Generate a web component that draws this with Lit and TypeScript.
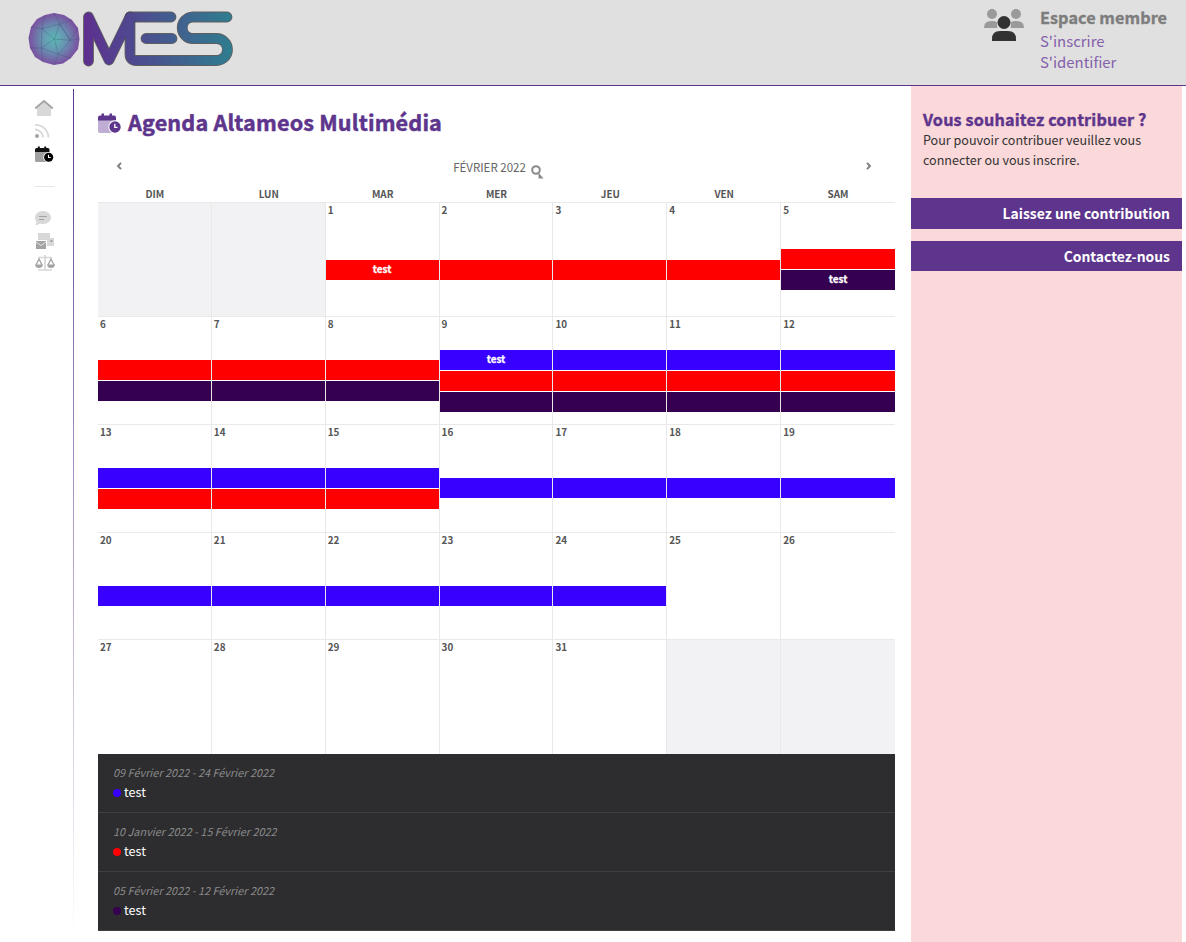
import { LitElement, html, svg, css, nothing } from "lit";
import { customElement } from "lit/decorators.js";
import { classMap } from "lit/directives/class-map.js";

type Bar = { color: "red" | "blue" | "plum"; label?: string };
type Day = { num?: number; bars: Bar[] };

const R: Bar = { color: "red" };
const B: Bar = { color: "blue" };
const P: Bar = { color: "plum" };

const WEEKDAYS = ["DIM", "LUN", "MAR", "MER", "JEU", "VEN", "SAM"];

function barsFor(day: number): Bar[] {
  if (day === 1) return [{ ...R, label: "test" }];
  if (day < 5) return [R];
  if (day === 5) return [R, { ...P, label: "test" }];
  if (day < 9) return [R, P];
  if (day === 9) return [{ ...B, label: "test" }, R, P];
  if (day < 13) return [B, R, P];
  if (day < 16) return [B, R];
  if (day < 25) return [B];
  return [];
}

const DAYS: Day[] = Array.from({ length: 35 }, (_, i) => {
  const num = i - 1;
  return num >= 1 && num <= 31 ? { num, bars: barsFor(num) } : { bars: [] };
});

const EVENTS = [
  { dates: "09 Février 2022 - 24 Février 2022", color: "blue", name: "test" },
  { dates: "10 Janvier 2022 - 15 Février 2022", color: "red", name: "test" },
  { dates: "05 Février 2022 - 12 Février 2022", color: "plum", name: "test" },
];

@customElement("app-root")
export class AppRoot extends LitElement {
  static styles = css`
    :host {
      display: block;
      height: 942px;
      overflow: hidden;
      background: #fff;
      font-family: "Noto Sans CJK JP", "Noto Sans", sans-serif;
      color: #333;
    }
    * { box-sizing: border-box; }
    svg { display: block; flex: none; }
    .header {
      height: 86px;
      display: flex;
      justify-content: space-between;
      background: #e0e0e0;
      border-bottom: 1px solid #5d368b;
      padding: 6px 0 0 24px;
    }
    .member { display: flex; width: 202px; gap: 16px; }
    .member svg { margin-top: 2px; }
    .member-title { font-size: 16.2px; font-weight: 700; letter-spacing: 0.07px; -webkit-text-stroke: 0.35px; color: #7d7d7d; line-height: 23px; margin-bottom: 1px; white-space: nowrap; }
    .member-link { font-size: 14.9px; color: #8560ab; line-height: 21px; white-space: nowrap; }
    .body { display: flex; height: 856px; }
    .rail {
      width: 74px;
      padding: 13px 0 0 35px;
      display: flex;
      flex-direction: column;
      background: linear-gradient(#5d368b, rgba(93, 54, 139, 0)) right 0 top 3px / 1px 850px no-repeat;
    }
    .rail svg { margin-bottom: 6px; }
    .rail .sep ~ svg { margin-bottom: 4.5px; }
    .sep { width: 20px; height: 1px; background: #e6e6e6; margin: 18px 0 23px; }
    .main { width: 797px; margin-left: 24px; }
    .title { display: flex; margin-top: 22px; height: 29px; gap: 7px; }
    .title svg { margin-top: 5px; }
    .title-text { font-size: 21.6px; font-weight: 700; letter-spacing: 0.16px; -webkit-text-stroke: 0.5px; color: #5d358c; line-height: 27px; white-space: nowrap; }
    .nav { display: flex; height: 50px; padding: 19px 23px 0 18px; justify-content: space-between; }
    .arrow { margin-top: 6px; }
    .month { display: flex; gap: 5px; margin-left: 9px; font-size: 11.5px; color: #666; line-height: 22px; }
    .month svg { margin-top: 9px; }
    .weekdays { display: grid; grid-template-columns: repeat(7, 1fr); height: 15px; }
    .weekday { text-align: center; font-size: 9.9px; font-weight: 700; line-height: 14px; color: #555; }
    .grid {
      display: grid;
      grid-template-columns: repeat(7, 1fr);
      grid-template-rows: 114px 108px 107.5px 107.5px 115px;
    }
    .day {
      border-top: 1px solid #e9e9e9;
      border-right: 1px solid #e9e9e9;
      display: flex;
      flex-direction: column;
      min-width: 0;
      min-height: 0;
    }
    .day:nth-child(7n) { border-right: 0; }
    .day.off { background: #f2f2f4; }
    .num { height: 20.4px; flex: none; padding-left: 2px; font-size: 9.9px; font-weight: 700; line-height: 15px; color: #555; }
    .bars { flex: 1; display: flex; flex-direction: column; justify-content: center; gap: 1px; }
    .bar { height: 20px; flex: none; text-align: center; color: #fff; font-size: 9.9px; font-weight: 700; -webkit-text-stroke: 0.3px; line-height: 19px; }
    .red { background: #f00; }
    .blue { background: #3700ff; }
    .plum { background: #34004f; }
    .list { background: #2d2d2f; height: 177px; }
    .event { height: 59px; padding: 8px 15px 0; border-bottom: 1px solid #3f3f41; }
    .dates { font-size: 10.9px; font-style: italic; color: #8a8a8a; line-height: 20px; }
    .name { display: flex; align-items: center; gap: 3px; font-size: 12.6px; color: #fff; line-height: 20px; }
    .dot { width: 8px; height: 8px; margin-top: 1px; border-radius: 50%; }
    .side { width: 271px; margin-left: 16px; background: #fbd8d9; padding-top: 23px; }
    .side-title { font-size: 16.2px; font-weight: 700; letter-spacing: 0.15px; -webkit-text-stroke: 0.4px; color: #5d358c; line-height: 21px; padding-left: 12px; white-space: nowrap; }
    .side-text { font-size: 12.55px; line-height: 20px; padding-left: 12px; height: 68px; white-space: nowrap; }
    .btn {
      height: 31px;
      margin-bottom: 12px;
      background: #5d358c;
      color: #fff;
      text-align: right;
      font-size: 13.9px;
      font-weight: 700;
      line-height: 30px;
      padding-right: 12px;
    }
    .btn + .btn { height: 30px; }
  `;

  private logo() {
    const letters = svg`
      <path d="M64.5 55V11L85 54L106 11H147"/>
      <path d="M106 11V48Q106 54.500 112 54.500H192.500A11 11 0 0 0 192.500 32.500H168A10.800 10.800 0 0 1 168 11H203"/>
      <path d="M122 32.500H148V32.510"/>`;
    return html`<svg width="212" height="66" viewBox="0 0 212 66" fill="none">
      <defs>
        <linearGradient id="lg" gradientUnits="userSpaceOnUse" x1="60" y1="0" x2="208" y2="0">
          <stop offset="0" stop-color="#5e2f8f"/><stop offset="1" stop-color="#2f7d8f"/>
        </linearGradient>
        <radialGradient id="rg"><stop offset="0" stop-color="#5cb8b4"/><stop offset=".45" stop-color="#6796b2"/><stop offset="1" stop-color="#7a4fa0"/></radialGradient>
      </defs>
      <path fill="url(#rg)" d="M21 9L30 7L40 9L48 14L54 22L55.500 33L54 43L47 52L39 57.500L30 59L19 56L11 51L6 42L4.500 32L7 21L13 13Z"/>
      <path stroke="#34506a" stroke-width=".6" opacity=".5" d="M30.300 33L18 22.700L17.300 42L30.300 33L35.700 18L46.300 34.300L30.300 33L34.300 48.300L17.300 42M18 22.700L35.700 18L30 7M35.700 18L48 14M46.300 34.300L35.700 18M46.300 34.300L34.300 48.300L30 59M34.300 48.300L47 52M46.300 34.300L55 33M46.300 34.300L54 22M18 22.700L7 21M18 22.700L21 9M17.300 42L6 42M17.300 42L19 56"/>
      <g stroke="#333" stroke-opacity=".75" stroke-width="10.800" stroke-linecap="round" stroke-linejoin="round">${letters}</g>
      <g stroke="url(#lg)" stroke-width="9" stroke-linecap="round" stroke-linejoin="round">
        <path d="M64.500 55V11L85 54L106 11H147"/>
        <path d="M106 11V48Q106 54.500 112 54.500H192.500A11 11 0 0 0 192.500 32.500H168A10.800 10.800 0 0 1 168 11H203"/>
        <path d="M122 32.500H148.010V32.510"/>
      </g>
    </svg>`;
  }

  private calendarIcon(w: number, top: string, body: string, clock: string, hand = "#fff") {
    return html`<svg width=${w} height=${w * 0.87} viewBox="0 0 23 20">
      <path fill=${body} d="M0 7H18V18Q18 20 16 20H2Q0 20 0 18Z"/>
      <path fill=${top} d="M0 7.500V4.500Q0 2.500 2 2.500H3.500V.5H6V2.500H11.500V.5H14V2.500H16Q18 2.500 18 4.500V7.500Z"/>
      <circle cx="17" cy="14" r="6.700" fill="#fff"/>
      <circle cx="17" cy="14" r="5.700" fill=${clock}/>
      <path d="M16.800 10.800V14.300H19.500" fill="none" stroke=${hand} stroke-width="1.300"/>
    </svg>`;
  }

  render() {
    return html`
      <header class="header">
        ${this.logo()}
        <div class="member">
          <svg width="40" height="34" viewBox="0 0 40 34">
            <g fill="#9a9a9a"><circle cx="8" cy="6" r="5"/><circle cx="32" cy="6" r="5"/>
            <path d="M0 20Q0 13 7 13H9Q12 13 13.500 14.500Q12.500 17 13.500 20ZM40 20Q40 13 33 13H31Q28 13 26.500 14.500Q27.500 17 26.500 20Z"/></g>
            <circle cx="20" cy="14.500" r="6.500" fill="#323232"/>
            <path fill="#323232" d="M8 33V31Q8 23 16 23H24Q32 23 32 31V33Z"/>
          </svg>
          <div>
            <div class="member-title">Espace membre</div>
            <div class="member-link">S'inscrire</div>
            <div class="member-link">S'identifier</div>
          </div>
        </div>
      </header>
      <div class="body">
        <nav class="rail">
          <svg width="19" height="18" viewBox="0 0 19 18"><path fill="#d8d8d8" d="M2 9L9 3L16 9V16Q16 17 15 17H3Q2 17 2 16Z"/><path d="M.8 9L9 2L17.200 9" fill="none" stroke="#a3a3a3" stroke-width="1.800" stroke-linecap="round"/></svg>
          <svg width="15" height="17" viewBox="0 0 15 17"><circle cx="2" cy="13" r="2" fill="#a3a3a3"/><path d="M0 6.500A8 8 0 0 1 8 14.500M0 1.800A13 13 0 0 1 13.500 14.500" fill="none" stroke="#d8d8d8" stroke-width="1.800"/></svg>
          ${this.calendarIcon(18.5, "#111", "#a0a0a0", "#000")}
          <div class="sep"></div>
          <svg width="17" height="18" viewBox="0 0 17 18"><path fill="#d8d8d8" d="M8 1C12.500 1 16 4 16 7.500S12.500 14 8 14Q6.500 14 5 13.500Q3 15 0 15Q1.500 13 1.500 11.500Q0 10 0 7.500C0 4 3.500 1 8 1Z"/><path d="M4 6.500H12M4 9.500H9" stroke="#a3a3a3"/></svg>
          <svg width="20" height="18" viewBox="0 0 20 18"><path fill="#d8d8d8" d="M3 0H15V5H19V13H12V7H3Z"/><path fill="#a3a3a3" d="M15.500 7H17.500V9H15.500ZM1 8H11V16H1Z"/><path d="M1 9L6 12.500L11 9" fill="none" stroke="#e5e5e5"/></svg>
          <svg width="20" height="17" viewBox="0 0 20 17"><path d="M3 2.500H17M10 0V14.500M3 15H17" stroke="#d8d8d8" stroke-width="1.700"/><path d="M1 10L4 4L7 10M13 10L16 4L19 10" fill="none" stroke="#a3a3a3" stroke-width="1.300"/><path fill="#a3a3a3" d="M0 9.500H8Q7.500 13 4 13T0 9.500ZM12 9.500H20Q19.500 13 16 13T12 9.500Z"/></svg>
        </nav>
        <main class="main">
          <div class="title">${this.calendarIcon(23, "#5d358c", "#c0add4", "#5d358c")}<div class="title-text">Agenda Altameos Multimédia</div></div>
          <div class="nav">
            <svg class="arrow" width="7" height="8" viewBox="0 0 7 8"><path d="M5 .8L2 4L5 7.200" fill="none" stroke="#7d7d7d" stroke-width="1.900"/></svg>
            <div class="month"><span>FÉVRIER 2022</span>
              <svg width="13" height="14" viewBox="0 0 13 14"><circle cx="5" cy="5" r="3.800" fill="none" stroke="#8a8a8a" stroke-width="2"/><path fill="#8a8a8a" d="M7.500 7.500L12.500 13.500H7.500Z"/></svg>
            </div>
            <svg class="arrow" width="7" height="8" viewBox="0 0 7 8"><path d="M2 .8L5 4L2 7.200" fill="none" stroke="#7d7d7d" stroke-width="1.900"/></svg>
          </div>
          <div class="weekdays">${WEEKDAYS.map((d) => html`<div class="weekday">${d}</div>`)}</div>
          <div class="grid">
            ${DAYS.map((d) => html`<div class=${classMap({ day: true, off: !d.num })}>
              <div class="num">${d.num ?? nothing}</div>
              <div class="bars">${d.bars.map((b) => html`<div class="bar ${b.color}">${b.label ?? nothing}</div>`)}</div>
            </div>`)}
          </div>
          <div class="list">
            ${EVENTS.map((e) => html`<div class="event">
              <div class="dates">${e.dates}</div>
              <div class="name"><span class="dot ${e.color}"></span>${e.name}</div>
            </div>`)}
          </div>
        </main>
        <aside class="side">
          <div class="side-title">Vous souhaitez contribuer ?</div>
          <div class="side-text">Pour pouvoir contribuer veuillez vous<br>connecter ou vous inscrire.</div>
          <div class="btn">Laissez une contribution</div>
          <div class="btn">Contactez-nous</div>
        </aside>
      </div>`;
  }
}
